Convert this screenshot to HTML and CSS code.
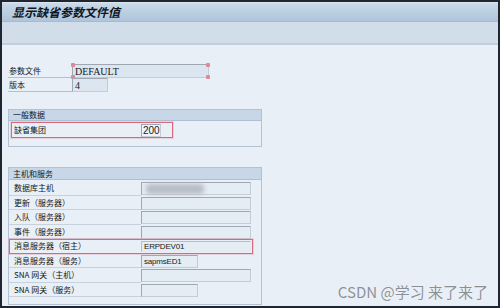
FILE: index.html
```html
<!DOCTYPE html>
<html lang="zh">
<head>
<meta charset="utf-8">
<title>显示缺省参数文件值</title>
<link rel="stylesheet" href="styles.css">
</head>
<body>
<div class="window">
  <div class="titlebar"><span class="title">显示缺省参数文件值</span></div>
  <div class="toolbar"></div>
  <div class="sep"></div>
  <div class="content">
    <div class="head-form">
      <div class="frow">
        <span class="flabel">参数文件</span>
        <span class="input wide serif sel">DEFAULT<i class="h tl"></i><i class="h bl"></i><i class="h tr"></i><i class="h br"></i></span>
      </div>
      <div class="frow">
        <span class="flabel">版本</span>
        <span class="input narrow serif">4</span>
      </div>
    </div>

    <div class="group g1">
      <div class="ghead">一般数据</div>
      <div class="gbody">
        <div class="grow hl hl-short">
          <span class="glabel">缺省集团</span>
          <span class="input client">200</span>
        </div>
      </div>
    </div>

    <div class="group g2">
      <div class="ghead">主机和服务</div>
      <div class="gbody rows">
        <div class="grow"><span class="glabel">数据库主机</span><span class="input long"><span class="blur"></span></span></div>
        <div class="grow"><span class="glabel">更新（服务器）</span><span class="input long"></span></div>
        <div class="grow"><span class="glabel">入队（服务器）</span><span class="input long"></span></div>
        <div class="grow"><span class="glabel">事件（服务器）</span><span class="input long"></span></div>
        <div class="grow hl hl-long"><span class="glabel">消息服务器（宿主）</span><span class="input long val">ERPDEV01</span></div>
        <div class="grow"><span class="glabel">消息服务器（服务）</span><span class="input mid val">sapmsED1</span></div>
        <div class="grow"><span class="glabel">SNA 网关（主机）</span><span class="input long"></span></div>
        <div class="grow"><span class="glabel">SNA 网关（服务）</span><span class="input mid"></span></div>
      </div>
    </div>
  </div>
  <div class="watermark">CSDN @学习 来了来了</div>
</div>
</body>
</html>
```
FILE: styles.css
```css
* { box-sizing: border-box; }
html, body { margin: 0; padding: 0; }
body {
  width: 500px;
  height: 308px;
  overflow: hidden;
  font-family: "Noto Sans CJK SC", "Liberation Sans", sans-serif;
  color: #111820;
}
.window {
  position: relative;
  width: 500px;
  height: 308px;
  border: 2px solid #20262f;
  display: flex;
  flex-direction: column;
  background: #e9eff7;
}
.titlebar {
  height: 20px;
  flex: none;
  background: linear-gradient(#e0e9f2 0, #c8d8e7 2px, #bacfe2 10px, #aec4da 100%);
  border-bottom: 1px solid #a6bbd0;
  display: flex;
  align-items: center;
  padding-left: 10px;
}
.title {
  font-size: 12px;
  font-weight: bold;
  font-style: italic;
  color: #10161f;
  line-height: 1;
}
.toolbar {
  height: 21px;
  flex: none;
  background: #d1dde9;
}
.sep {
  height: 2px;
  flex: none;
  background: #c2cedb;
}
.content {
  flex: 1;
  padding: 19px 0 0 6px;
}
.frow {
  display: flex;
  height: 14px;
}
.flabel {
  width: 64px;
  height: 14px;
  font-size: 8px;
  line-height: 13px;
  padding-left: 1px;
  border-bottom: 1px solid #b3bfcb;
}
.input {
  position: relative;
  display: inline-flex;
  align-items: center;
  height: 14px;
  border: 1px solid #9ea8b3;
  border-right-color: #c4ccd4;
  border-bottom-color: #c4ccd4;
  background: #e4ecf4;
  padding-left: 2px;
  font-size: 8px;
  color: #1a1a1a;
}
.serif {
  font-family: "Liberation Serif", serif;
  font-size: 10px;
  background: #dbe6f0;
}
.wide { width: 137px; }
.narrow { width: 36px; }
.h {
  position: absolute;
  width: 4px;
  height: 4px;
  background: #dc8a98;
  border-radius: 1px;
}
.tl { left: -2px; top: -2px; }
.bl { left: -2px; bottom: -2px; }
.tr { right: -2px; top: -2px; }
.br { right: -2px; bottom: -2px; }

.group {
  width: 254px;
  border: 1px solid #b2c2d2;
}
.g1 { margin-top: 17px; padding-bottom: 8px; }
.g2 { margin-top: 20px; height: 138px; }
.ghead {
  height: 11px;
  background: #c7d7e7;
  border-bottom: 1px solid #adc0d2;
  font-size: 8px;
  line-height: 10px;
  padding-left: 4px;
}
.g2 .ghead { height: 12px; line-height: 11px; }
.gbody { padding-top: 1px; }
.rows {
  padding-top: 1px;
  display: grid;
  grid-template-rows: 15px 14px 15px 14px 15px 14px 15px 14px;
}
.grow {
  display: flex;
  align-items: center;
}
.glabel {
  width: 132px;
  flex: none;
  padding-left: 5px;
  font-size: 8px;
  line-height: 13px;
  align-self: stretch;
  border-bottom: 1px solid #c8d2dc;
  white-space: nowrap;
}
.hl .glabel { border-bottom: none; }
.hl {
  position: relative;
}
.hl::after {
  content: "";
  position: absolute;
  inset: 0;
  border: 1px solid #d86a7c;
  box-shadow: 0 0 0 1px rgba(230, 150, 165, 0.35);
  pointer-events: none;
}
.hl-short { width: 162px; height: 16px; margin-left: 2px; }
.hl-short .glabel { width: 130px; padding-left: 3px; line-height: 16px; }
.hl-long { width: 244px; }
.client {
  width: 20px;
  height: 13px;
  font-family: "Liberation Sans", sans-serif;
  font-size: 10px;
  background: #f0f4f8;
  padding-left: 1px;
}
.long { width: 110px; height: 13px; }
.mid { width: 57px; height: 13px; }
.val {
  font-family: "Liberation Sans", sans-serif;
  font-size: 8px;
  letter-spacing: -0.2px;
}
.hl-long .input {
  height: 11px;
  border-color: #b4bec8 #e4ecf4 #e4ecf4 #b4bec8;
}
.blur {
  display: block;
  width: 58px;
  height: 10px;
  margin-left: 2px;
  background: #b9bec6;
  filter: blur(2px);
  border-radius: 4px;
}
.watermark {
  position: absolute;
  right: 10px;
  bottom: 5px;
  font-size: 15px;
  color: #8b9097;
  font-family: "Noto Sans CJK SC", "Liberation Sans", sans-serif;
  line-height: 18px;
  text-shadow: 0 0 1px #fff;
}
```
